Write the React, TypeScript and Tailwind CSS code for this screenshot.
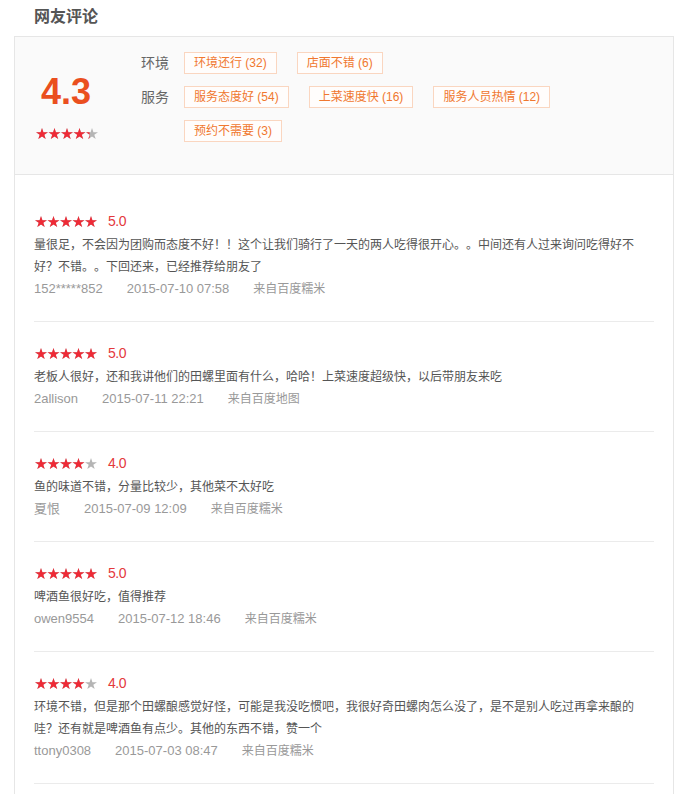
import React from "react";

const STAR =
  "6,0 7.42,4.35 12,4.35 8.29,7.05 9.71,11.4 6,8.71 2.29,11.4 3.71,7.05 0,4.35 4.58,4.35";

function Stars({ value, id }: { value: number; id: string }) {
  const total = 62;
  const redW = value >= 5 ? total : Math.floor(value) * 12.5 + (value % 1) * 12;
  const stars = [0, 1, 2, 3, 4];
  return (
    <svg width={62} height={11} viewBox="0 0 62 11.4" preserveAspectRatio="none" className="block">
      <defs>
        <clipPath id={id}>
          <rect x={0} y={0} width={redW} height={12} />
        </clipPath>
      </defs>
      {stars.map((i) => (
        <polygon key={"g" + i} points={STAR} transform={`translate(${i * 12.5} 0)`} fill="#b5b5b5" />
      ))}
      <g clipPath={`url(#${id})`}>
        {stars.map((i) => (
          <polygon key={"r" + i} points={STAR} transform={`translate(${i * 12.5} 0)`} fill="#ee2a36" />
        ))}
      </g>
    </svg>
  );
}

function Tag({ children }: { children: React.ReactNode }) {
  return (
    <span className="inline-flex h-[22px] items-center whitespace-nowrap border border-[#fad6c0] bg-[#fffdfc] px-[9px] text-[12px] leading-[20px] text-[#f0782f]">
      {children}
    </span>
  );
}

const reviews = [
  {
    stars: 5,
    score: "5.0",
    text: "量很足，不会因为团购而态度不好！！这个让我们骑行了一天的两人吃得很开心。。中间还有人过来询问吃得好不好？不错。。下回还来，已经推荐给朋友了",
    user: "152*****852",
    date: "2015-07-10 07:58",
    source: "来自百度糯米",
  },
  {
    stars: 5,
    score: "5.0",
    text: "老板人很好，还和我讲他们的田螺里面有什么，哈哈！上菜速度超级快，以后带朋友来吃",
    user: "2allison",
    date: "2015-07-11 22:21",
    source: "来自百度地图",
  },
  {
    stars: 4,
    score: "4.0",
    text: "鱼的味道不错，分量比较少，其他菜不太好吃",
    user: "夏恨",
    date: "2015-07-09 12:09",
    source: "来自百度糯米",
  },
  {
    stars: 5,
    score: "5.0",
    text: "啤酒鱼很好吃，值得推荐",
    user: "owen9554",
    date: "2015-07-12 18:46",
    source: "来自百度糯米",
  },
  {
    stars: 4,
    score: "4.0",
    text: "环境不错，但是那个田螺酿感觉好怪，可能是我没吃惯吧，我很好奇田螺肉怎么没了，是不是别人吃过再拿来酿的哇？还有就是啤酒鱼有点少。其他的东西不错，赞一个",
    user: "ttony0308",
    date: "2015-07-03 08:47",
    source: "来自百度糯米",
  },
];

export default function App() {
  return (
    <div
      className="min-h-[794px] w-[688px] bg-white [text-spacing-trim:space-all]"
      style={{ fontFamily: '"Liberation Sans", "Noto Sans CJK SC", sans-serif' }}
    >
      <div className="h-[36px] pl-[34px] pt-[5px] text-[16px] font-bold leading-[24px] text-[#555]">网友评论</div>
      <div className="ml-[14px] w-[660px] border border-[#e6e6e6]">
        {/* summary */}
        <div className="flex h-[138px] border-b border-[#e6e6e6] bg-[#fafafa] pl-[19px]">
          <div className="flex w-[64px] flex-col items-center pt-[37px]">
            <div className="text-[36px] font-bold leading-[36px] text-[#ea4f1e]">4.3</div>
            <div className="mt-[18px] pl-[2px]">
              <Stars value={4.3} id="sum" />
            </div>
          </div>
          <div className="ml-[43px] flex flex-col gap-[12px] pt-[15px]">
            <div className="flex items-start">
              <div className="w-[43px] text-[14px] leading-[22px] text-[#666]">环境</div>
              <div className="flex w-[420px] flex-wrap gap-x-[20px] gap-y-[12px]">
                <Tag>环境还行 (32)</Tag>
                <Tag>店面不错 (6)</Tag>
              </div>
            </div>
            <div className="flex items-start">
              <div className="w-[43px] text-[14px] leading-[22px] text-[#666]">服务</div>
              <div className="flex w-[420px] flex-wrap gap-x-[20px] gap-y-[12px]">
                <Tag>服务态度好 (54)</Tag>
                <Tag>上菜速度快 (16)</Tag>
                <Tag>服务人员热情 (12)</Tag>
                <Tag>预约不需要 (3)</Tag>
              </div>
            </div>
          </div>
        </div>
        {/* reviews */}
        <div className="px-[19px] pb-[20px] pt-[15px]">
          {reviews.map((r, i) => (
            <div key={i} className="border-b border-[#ebebeb] pb-[21px] pt-[21px]">
              <div className="flex h-[20px] items-center">
                <div className="ml-[1px]">
                  <Stars value={r.stars} id={"r" + i} />
                </div>
                <span className="ml-[11px] text-[14px] tracking-[-0.5px] text-[#e4393c]">{r.score}</span>
              </div>
              <div className="mt-[3px] text-[12px] leading-[22px] text-[#555]">{r.text}</div>
              <div className="flex items-center gap-[24px] leading-[22px] text-[#999]">
                <span className="text-[13px]">{r.user}</span>
                <span className="text-[13px]">{r.date}</span>
                <span className="text-[12px]">{r.source}</span>
              </div>
            </div>
          ))}
        </div>
      </div>
    </div>
  );
}
